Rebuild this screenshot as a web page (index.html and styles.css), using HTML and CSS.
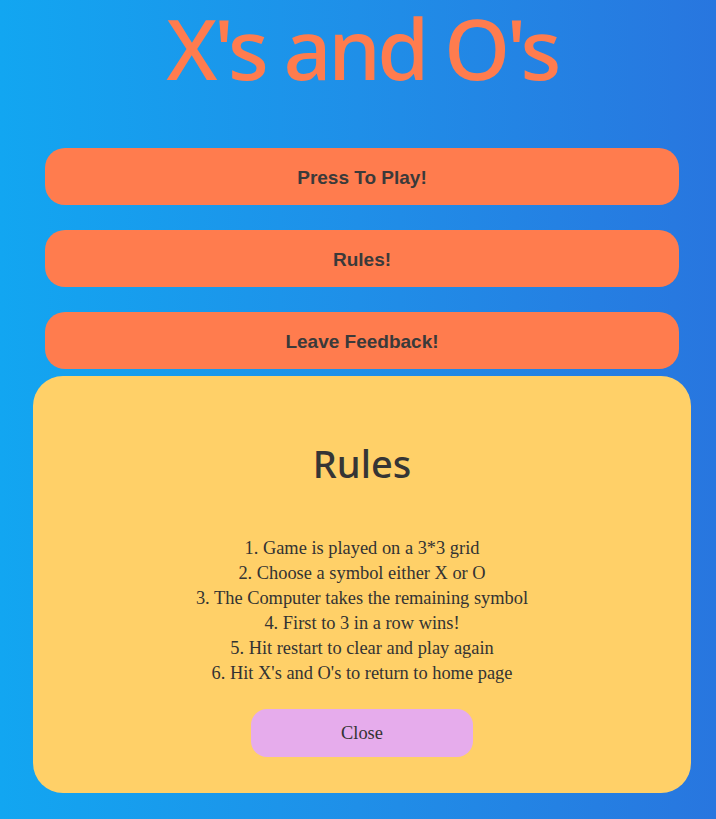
FILE: index.html
```html
<!DOCTYPE html>
<html lang="en">
<head>
<meta charset="utf-8">
<title>X's and O's</title>
<link rel="stylesheet" href="styles.css">
</head>
<body>
<main class="page">
  <h1 class="title">X's and O's</h1>
  <nav class="menu">
    <button class="menu-btn">Press To Play!</button>
    <button class="menu-btn">Rules!</button>
    <button class="menu-btn">Leave Feedback!</button>
  </nav>
  <section class="modal">
    <h2 class="modal-title">Rules</h2>
    <div class="rules">
      <p>1. Game is played on a 3*3 grid</p>
      <p>2. Choose a symbol either X or O</p>
      <p>3. The Computer takes the remaining symbol</p>
      <p>4. First to 3 in a row wins!</p>
      <p>5. Hit restart to clear and play again</p>
      <p>6. Hit X's and O's to return to home page</p>
    </div>
    <button class="close-btn">Close</button>
  </section>
</main>
</body>
</html>
```

FILE: styles.css
```css
* { box-sizing: border-box; }
html, body { margin: 0; height: 100%; }
body {
  background: linear-gradient(90deg, #12a6f1 0%, #1f8fe8 50%, #2876df 100%);
  font-family: "Liberation Sans", Arial, sans-serif;
  overflow: hidden;
}
.page {
  display: flex;
  flex-direction: column;
  padding-left: 8px;
}
.title {
  margin: 0;
  height: 100px;
  text-align: center;
  font-family: "Noto Sans", sans-serif;
  font-weight: 500;
  font-size: 84px;
  line-height: 96px;
  letter-spacing: -3.5px;
  color: #ff7c4e;
}
.menu {
  display: flex;
  flex-direction: column;
  gap: 25px;
  margin-top: 48px;
  margin-left: 37px;
  width: 634px;
}
.menu-btn {
  height: 57px;
  padding-top: 3px;
  border: none;
  border-radius: 20px;
  background: #ff7c4e;
  color: #3a3a3a;
  font-family: "Liberation Sans", Arial, sans-serif;
  font-weight: bold;
  font-size: 19px;
}
.modal {
  margin-top: 7px;
  margin-left: 25px;
  width: 658px;
  height: 417px;
  background: #ffd068;
  border-radius: 30px;
  display: flex;
  flex-direction: column;
  align-items: center;
  padding-top: 62px;
}
.modal-title {
  margin: 0;
  font-family: "Noto Sans", sans-serif;
  font-weight: 500;
  font-size: 38px;
  line-height: 50px;
  color: #353535;
}
.rules {
  margin-top: 48px;
  text-align: center;
  font-family: "Liberation Serif", "Times New Roman", serif;
  font-size: 18.4px;
  line-height: 25px;
  color: #333;
}
.rules p { margin: 0; }
.close-btn {
  margin-top: 23px;
  width: 222px;
  height: 48px;
  border: none;
  border-radius: 16px;
  background: #e6acec;
  color: #333;
  font-family: "Liberation Serif", "Times New Roman", serif;
  font-size: 18.4px;
}
```
